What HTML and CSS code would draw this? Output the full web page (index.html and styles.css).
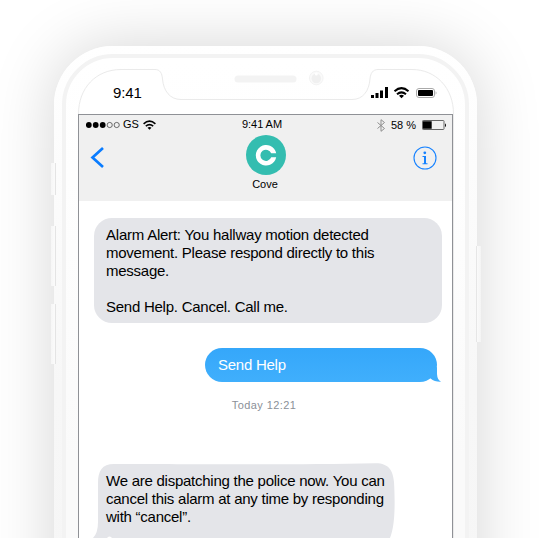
FILE: index.html
```
<!DOCTYPE html>
<html lang="en">
<head>
<meta charset="utf-8">
<title>Cove messages</title>
<link rel="stylesheet" href="styles.css">
</head>
<body>
<main class="stage">
  <div class="phone">
    <i class="side mute"></i><i class="side up"></i><i class="side down"></i><i class="side power"></i>
    <div class="rim"></div>
    <svg class="glass" width="423" height="492" viewBox="54 46 423 492" aria-hidden="true">
      <path d="M78.500 540V114C78.500 88 96 69.500 121 69.500H155C160 69.500 162 73 162.500 79C163.500 91 170 99.500 181 99.500H352C363 99.500 369 91 370 79C370.500 73 373 69.500 378 69.500H412C436 69.500 453.500 88 453.500 114V540" fill="#fff" stroke="#eaeaea"/>
      <rect x="234.500" y="75.500" width="62" height="7" rx="3.500" fill="#f3f3f3"/>
      <circle cx="316.300" cy="78" r="6.800" fill="#fafafa" stroke="#f3f3f3"/>
      <circle cx="316.300" cy="78.500" r="4.800" fill="#f0f0f0"/>
      <circle cx="316.300" cy="74" r="1.500" fill="#fff"/>
    </svg>
    <div class="display">
      <div class="system">
        <span class="clock">9:41</span>
        <svg width="66" height="14" viewBox="371 86 66 14" aria-hidden="true">
          <path d="M371 95h3v3h-3zM375.500 93h3v5h-3zM380 90.500h3v7.500h-3zM385 87h3v11h-3z"/>
          <g fill="none" stroke="#000" stroke-width="2"><path d="M394.500 91.300Q401.500 85 408.500 91.300"/><path d="M397 94.300Q401.500 90.400 406 94.300"/></g>
          <path d="M399 95.800Q401.500 93.900 404 95.800L401.500 98.300z"/>
          <rect x="416.500" y="88.500" width="18" height="9" rx="2.500" fill="none" stroke="#aaa"/>
          <rect x="418" y="90" width="15" height="6" rx="1"/>
          <path d="M435.700 91.300q1.500 1.700 0 3.400z" fill="#999"/>
        </svg>
      </div>
      <section class="screen">
        <header class="header">
          <div class="status">
            <div class="carrier">
              <svg width="34" height="8" viewBox="86 122 34 8" aria-hidden="true"><g><circle cx="88.800" cy="126" r="2.900"/><circle cx="95.700" cy="126" r="2.900"/><circle cx="102.700" cy="126" r="2.900"/></g><g fill="none" stroke="#333" stroke-width=".7"><circle cx="109.700" cy="126" r="2.600"/><circle cx="116.700" cy="126" r="2.600"/></g></svg>
              <span class="gs">GS</span>
              <svg width="13" height="10" viewBox="142 120 13 10" aria-hidden="true"><g fill="none" stroke="#000" stroke-width="1.600"><path d="M142.600 123.800Q148.500 118.500 154.400 123.800"/><path d="M144.800 126.200Q148.500 123 152.200 126.200"/></g><path d="M146.500 127.700Q148.500 126.200 150.500 127.700L148.500 129.700z"/></svg>
            </div>
            <span class="time">9:41 AM</span>
            <div class="power-info">
              <svg width="8" height="13" viewBox="377 119 8 13" aria-hidden="true"><path d="M377.500 122.500L384.500 128.500L381 131.300V119.700L384.500 122.500L377.500 128.500" fill="none" stroke="#8f8f8f"/></svg>
              <span class="percent">58 %</span>
              <svg width="25" height="11" viewBox="422 120 25 11" aria-hidden="true"><rect x="422.500" y="120.500" width="21.500" height="9" rx=".7" fill="none" stroke="#666"/><path d="M423 121.300h8.700v7.500H423zM445 123.300q2 2 0 4z"/></svg>
            </div>
          </div>
          <div class="contact">
            <svg class="back" width="15" height="23" viewBox="90 146 15 23" aria-label="Back"><path d="M103 148L92.500 157.500L103 167" fill="none" stroke="#0a7cff" stroke-width="2.700"/></svg>
            <div class="person">
              <svg width="40" height="40" viewBox="246 135 40 40" aria-hidden="true"><circle cx="266" cy="155" r="20" fill="#34bdb0"/><path d="M276.200 153.300H271.200A5.600 5.600 0 1 0 271.200 157.300H276.200A10.300 10.300 0 1 1 276.200 153.300z" fill="#fff"/></svg>
              <span class="name">Cove</span>
            </div>
            <svg class="info" width="24" height="24" viewBox="413 146 24 24" aria-label="Info"><circle cx="425" cy="158" r="11" fill="none" stroke="#1682ff" stroke-width="1.100"/><circle cx="424.800" cy="152.800" r="1.400" fill="#1682ff"/><path d="M422.500 156H426V163.200H427.500V164.200H422.500V163.200H424V157H422.500z" fill="#1682ff"/></svg>
          </div>
        </header>
        <div class="thread">
          <div class="bubble alert"><p><span class="wide">Alarm Alert: You hallway motion detected</span><br>movement. Please respond directly to this<br>message.</p><p>Send Help. Cancel. Call me.</p></div>
          <div class="bubble sent">Send Help<svg class="tail" width="16" height="15" viewBox="425 367 16 15" aria-hidden="true"><path d="M437 367V374Q437.300 380 441 381.700Q435 382 430.500 378.500L427 371z" fill="#3eadfc"/></svg></div>
          <time class="stamp">Today 12:21</time>
          <div class="reply">
            <svg class="shape" width="303" height="75" viewBox="92 463 303 75" aria-hidden="true"><path d="M98 483C98 471 102 464 114 464C180 464 300 465 375 463.300C389 463 393 471 394 482C395 500 395.500 525 390 538H93Q98 533 98 522z" fill="#e4e5e9"/><circle cx="109.500" cy="539" r="2.500" fill="#fff"/></svg>
            <p>We are dispatching the police now. You can<br>cancel this alarm at any time by responding<br>with “cancel”.</p>
          </div>
        </div>
      </section>
    </div>
  </div>
</main>
</body>
</html>
```
FILE: styles.css
```
* { box-sizing: border-box; }
body { margin: 0; background: #fff; color: #000; font-family: "Liberation Sans", Arial, sans-serif; }
p { margin: 0; }
svg { display: block; flex: none; }
.stage { width: 539px; height: 538px; overflow: hidden; padding: 46px 62px 0 54px; }
.phone { position: relative; width: 423px; height: 760px; border-radius: 59px; background: linear-gradient(#fff, #fdfdfd 80px, #f7f7f7 340px, #f5f5f5); box-shadow: 0 0 64px rgba(0,0,0,.17); }
.rim { position: absolute; inset: 8px 8px 0; border: 4px solid #f3f3f3; border-radius: 51px; background: linear-gradient(#fff, #fefefe 120px, #fafafa 400px); }
.glass { position: absolute; left: 0; top: 0; }
.side { position: absolute; left: -3px; width: 5px; background: linear-gradient(90deg, #f6f6f6, #fafafa 70%, #e4e4e4 71%); }
.mute { top: 117px; height: 32px; }
.up { top: 180px; height: 60px; }
.down { top: 258px; height: 60px; }
.power { left: 422px; top: 200px; height: 96px; background: linear-gradient(90deg, #e6e6e6 20%, #fafafa 21%, #f4f4f4); }
.display { position: relative; display: flex; flex-direction: column; width: 375px; margin-left: 24px; padding-top: 23px; }
.system { display: flex; justify-content: space-between; height: 45px; padding: 17px 16px 0 35px; }
.clock { margin-top: -1px; font-size: 15px; line-height: 15px; letter-spacing: -.15px; }
.screen { height: 424px; border: solid #8f9196; border-width: 1px 1px 0; overflow: hidden; background: #fff; }
.header { height: 86px; background: #f0f0f0; }
.status { display: grid; grid-template-columns: 156px auto 1fr; align-items: start; height: 20px; padding: 4px 5px 0 7px; font-size: 11px; line-height: 12px; }
.carrier, .power-info { display: flex; align-items: center; }
.gs { margin: -1px 4px 0 3px; }
.time { margin-top: -1px; letter-spacing: -.05px; }
.power-info { justify-content: flex-end; gap: 6px; }
.percent { margin-top: -2px; letter-spacing: 0; }
.contact { display: flex; justify-content: space-between; padding: 0 15px 0 11px; }
.back, .info { margin-top: 11px; }
.person { display: flex; flex-direction: column; align-items: center; margin-left: 14px; }
.name { margin-top: 3px; margin-left: -2px; font-size: 11px; line-height: 12px; }
.thread { display: flex; flex-direction: column; padding: 17px 10px 0 13px; font-size: 15px; line-height: 18px; letter-spacing: -.25px; }
.bubble { position: relative; }
.alert { display: flex; flex-direction: column; gap: 18px; width: 348px; height: 105px; margin-left: 2px; padding: 8px 12px; border-radius: 18px; background: #e4e5e9; white-space: nowrap; }
.wide { letter-spacing: -.23px; }
.sent { align-self: flex-end; width: 232px; height: 34px; margin: 25px 5px 0 0; padding: 8px 13px; border-radius: 17px; background: linear-gradient(#35a7fa, #40affc); color: #fff; }
.tail { position: absolute; right: -4px; bottom: 0; }
.stamp { align-self: center; margin: 17px 6px 0 0; font-size: 11px; line-height: 12px; letter-spacing: .4px; color: #8b9098; }
.reply { position: relative; height: 76px; margin-top: 52px; padding: 9px 0 0 14px; white-space: nowrap; }
.shape { position: absolute; left: 0; top: 0; }
.reply p { position: relative; }
```
